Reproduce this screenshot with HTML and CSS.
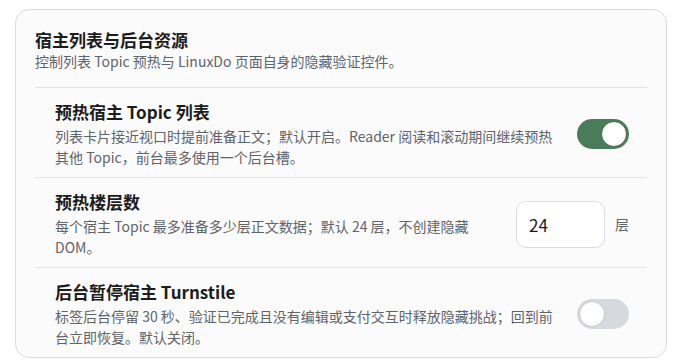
FILE: index.html
```html
<!DOCTYPE html>
<html lang="zh-CN">
<head>
    <meta charset="UTF-8">
    <meta name="viewport" content="width=device-width, initial-scale=1.0">
    <title>宿主列表与后台资源</title>
    <link rel="stylesheet" href="styles.css">
</head>
<body>
    <section class="card">
        <div class="card-head">
            <h2 class="card-title">宿主列表与后台资源</h2>
            <p class="card-sub">控制列表 Topic 预热与 LinuxDo 页面自身的隐藏验证控件。</p>
        </div>

        <div class="row">
            <div class="row-text">
                <div class="row-title">预热宿主 Topic 列表</div>
                <div class="row-desc">列表卡片接近视口时提前准备正文；默认开启。Reader 阅读和滚动期间继续预热其他 Topic，前台最多使用一个后台槽。</div>
            </div>
            <label class="switch">
                <input type="checkbox" checked>
                <span class="slider"></span>
            </label>
        </div>

        <div class="row">
            <div class="row-text">
                <div class="row-title">预热楼层数</div>
                <div class="row-desc">每个宿主 Topic 最多准备多少层正文数据；默认 24 层，不创建隐藏 DOM。</div>
            </div>
            <div class="number-field">
                <input class="number-input" type="text" value="24">
                <span class="unit">层</span>
            </div>
        </div>

        <div class="row">
            <div class="row-text">
                <div class="row-title">后台暂停宿主 Turnstile</div>
                <div class="row-desc">标签后台停留 30 秒、验证已完成且没有编辑或支付交互时释放隐藏挑战；回到前台立即恢复。默认关闭。</div>
            </div>
            <label class="switch">
                <input type="checkbox">
                <span class="slider"></span>
            </label>
        </div>
    </section>
</body>
</html>
```

FILE: styles.css
```css
body {
    margin: 0;
    background-color: #fff;
    font-family: "Noto Sans CJK SC", "Noto Sans", sans-serif;
    color: #1c1c1c;
}
.card {
    box-sizing: border-box;
    width: 652px;
    margin: 9px 0 0 15px;
    padding: 19px 19px 0 19px;
    background-color: #fbfbfb;
    border: 1px solid #dadada;
    border-radius: 14px;
}
.card-head {
    padding-bottom: 15px;
}
.card-title {
    margin: 0;
    font-size: 17px;
    line-height: 22px;
    font-weight: 700;
}
.card-sub {
    margin: 0;
    font-size: 14px;
    line-height: 21px;
    color: #5f636a;
}
.row {
    display: flex;
    align-items: center;
    gap: 22px;
    padding: 12px 18px 9px 20px;
    border-top: 1px solid #e4e4e4;
}
.row-text {
    flex: 1;
    min-width: 0;
}
.row-title {
    font-size: 17px;
    line-height: 24px;
    font-weight: 700;
}
.row-desc {
    margin-top: 2px;
    font-size: 14px;
    line-height: 21px;
    color: #5f636a;
}
.switch {
    position: relative;
    display: block;
    width: 52px;
    height: 30px;
    flex-shrink: 0;
    cursor: pointer;
}
.switch input {
    display: none;
}
.slider {
    position: absolute;
    inset: 0;
    border-radius: 15px;
    background-color: #d6d9de;
    transition: background-color 0.2s;
}
.slider::before {
    content: "";
    position: absolute;
    top: 2px;
    left: 2px;
    width: 24px;
    height: 24px;
    border: 1px solid #c4c7cc;
    border-radius: 50%;
    background-color: #fff;
    transition: left 0.2s;
}
.switch input:checked + .slider {
    background-color: #4b7c5a;
}
.switch input:checked + .slider::before {
    left: 24px;
    border-color: #3f6b4c;
}
.number-field {
    display: flex;
    align-items: center;
    gap: 10px;
    flex-shrink: 0;
}
.number-input {
    box-sizing: border-box;
    width: 89px;
    height: 47px;
    padding: 0 12px;
    border: 1px solid #d9dde2;
    border-radius: 10px;
    background-color: #fff;
    font-family: inherit;
    font-size: 17px;
    color: #1c1c1c;
    outline: none;
}
.unit {
    font-size: 14px;
    color: #5f636a;
}
```
